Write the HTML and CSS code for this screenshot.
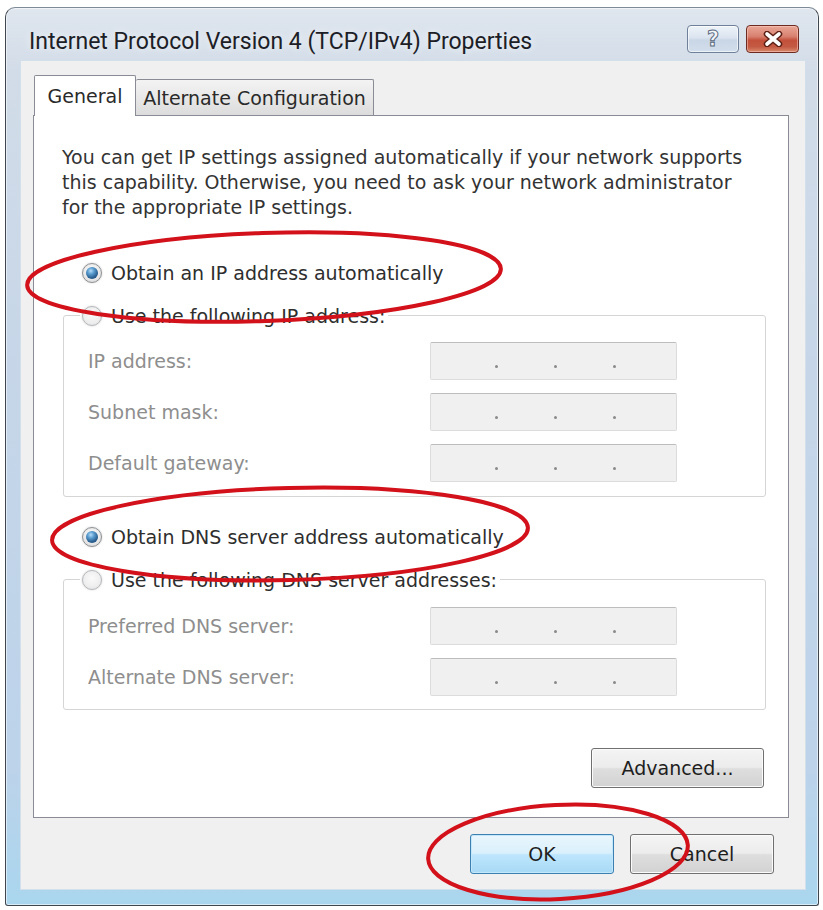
FILE: index.html
```html
<!DOCTYPE html>
<html>
<head>
<meta charset="utf-8">
<title>Internet Protocol Version 4 (TCP/IPv4) Properties</title>
<link rel="stylesheet" href="styles.css">
</head>
<body>
<div class="window">
  <div class="titlebar">
    <div class="title">Internet Protocol Version 4 (TCP/IPv4) Properties</div>
    <div class="controls">
      <div class="cbtn help"><span>?</span></div>
      <div class="cbtn close">
        <svg width="20" height="16" viewBox="0 0 20 16">
          <path d="M4 3 L16 13 M16 3 L4 13" stroke="#5b1f15" stroke-width="6.5" stroke-linecap="round"/>
          <path d="M4 3 L16 13 M16 3 L4 13" stroke="#ffffff" stroke-width="3.6" stroke-linecap="round"/>
        </svg>
      </div>
    </div>
  </div>
  <div class="client">
    <div class="tabs">
      <div class="tab active">General</div>
      <div class="tab">Alternate Configuration</div>
    </div>
    <div class="panel">
      <p class="intro">You can get IP settings assigned automatically if your network supports<br>this capability. Otherwise, you need to ask your network administrator<br>for the appropriate IP settings.</p>
      <div class="radio-row r1"><span class="radio checked"></span><span>Obtain an IP address automatically</span></div>
      <fieldset class="group g1">
        <legend><span class="radio off"></span><span>Use the following IP address:</span></legend>
        <div class="field"><span class="label">IP address:</span><div class="ipbox"><i></i><i></i><i></i></div></div>
        <div class="field"><span class="label">Subnet mask:</span><div class="ipbox"><i></i><i></i><i></i></div></div>
        <div class="field"><span class="label">Default gateway:</span><div class="ipbox"><i></i><i></i><i></i></div></div>
      </fieldset>
      <div class="radio-row r3"><span class="radio checked"></span><span>Obtain DNS server address automatically</span></div>
      <fieldset class="group g2">
        <legend><span class="radio off"></span><span>Use the following DNS server addresses:</span></legend>
        <div class="field"><span class="label">Preferred DNS server:</span><div class="ipbox"><i></i><i></i><i></i></div></div>
        <div class="field"><span class="label">Alternate DNS server:</span><div class="ipbox"><i></i><i></i><i></i></div></div>
      </fieldset>
      <div class="adv-row"><button class="btn adv">Advanced...</button></div>
    </div>
    <div class="footer">
      <button class="btn default">OK</button>
      <button class="btn">Cancel</button>
    </div>
  </div>
</div>
<svg class="annot" width="823" height="910" viewBox="0 0 823 910">
  <ellipse cx="264" cy="277" rx="237" ry="44" transform="rotate(-2 264 277)"/>
  <ellipse cx="290" cy="534" rx="238" ry="46" transform="rotate(-1.5 290 534)"/>
  <ellipse cx="558" cy="852" rx="130" ry="47" transform="rotate(-3 558 852)"/>
</svg>
</body>
</html>
```
FILE: styles.css
```css
html, body {
  margin: 0;
  padding: 0;
  background: #ffffff;
}
body {
  width: 823px;
  height: 910px;
  position: relative;
  overflow: hidden;
  font-family: "DejaVu Sans", "Open Sans", sans-serif;
  font-size: 19px;
  color: #2e2e2e;
}

.window {
  margin: 7px 0 0 5px;
  width: 814px;
  height: 899px;
  box-sizing: border-box;
  border: 1px solid #3f464e;
  border-top-color: #7d8a98;
  border-radius: 10px 10px 3px 3px;
  background: linear-gradient(180deg, #dfe6ee 0%, #d2dce8 7%, #c6d6e8 40%, #bcd3ea 85%, #a9d6ee 100%);
  box-shadow: inset 0 0 0 1px rgba(255,255,255,0.55);
  display: flex;
  flex-direction: column;
  padding: 0 13px 16px 15px;
}

.titlebar {
  height: 53px;
  display: flex;
  align-items: flex-start;
  flex: none;
}
.title {
  font-family: Roboto, "Open Sans", sans-serif;
  font-size: 23px;
  line-height: 28px;
  margin: 20px 0 0 8px;
  color: #1c2026;
  white-space: nowrap;
  text-shadow: 0 0 8px rgba(255,255,255,0.9);
}
.controls {
  margin: 17px 6px 0 auto;
  display: flex;
  gap: 7px;
}
.cbtn {
  height: 28px;
  box-sizing: border-box;
  border-radius: 4px;
  display: flex;
  align-items: center;
  justify-content: center;
}
.help {
  width: 52px;
  border: 1px solid #6f819a;
  background: linear-gradient(180deg, #eef3f8 0%, #dbe4ef 45%, #c9d6e6 55%, #d3deeb 100%);
  box-shadow: inset 0 0 0 1px rgba(255,255,255,0.6);
}
.help span {
  font-family: "DejaVu Sans", sans-serif;
  font-weight: bold;
  font-size: 21px;
  line-height: 1;
  color: #f3f6fa;
  -webkit-text-stroke: 1px #5b6a7f;
}
.close {
  width: 53px;
  border: 1px solid #6d2a20;
  background: linear-gradient(180deg, #e9a796 0%, #d88170 40%, #c3503b 55%, #c45a43 80%, #d98a6d 100%);
  box-shadow: inset 0 0 0 1px rgba(255,210,200,0.5);
}

.client {
  flex: 1;
  background: #f0f0f0;
  box-shadow: 0 0 0 1px #d3dfeb;
  display: flex;
  flex-direction: column;
  padding: 14px 16px 0 12px;
}

.tabs {
  display: flex;
  align-items: flex-end;
  height: 40px;
  position: relative;
  z-index: 1;
}
.tab {
  box-sizing: border-box;
  border: 1px solid #898c95;
  border-bottom: none;
  border-radius: 2px 2px 0 0;
  display: flex;
  align-items: center;
  justify-content: center;
  white-space: nowrap;
  color: #2a2a2a;
}
.tab.active {
  margin-left: 1px;
  width: 102px;
  height: 41px;
  margin-bottom: -1px;
  background: #ffffff;
}
.tab:not(.active) {
  width: 238px;
  height: 36px;
  border-left: none;
  background: linear-gradient(180deg, #f3f3f3 0%, #e8e8e8 50%, #dcdcdc 100%);
}

.panel {
  width: 756px;
  height: 703px;
  box-sizing: border-box;
  border: 1px solid #898c95;
  background: #ffffff;
  display: flex;
  flex-direction: column;
  padding: 29px 22px 0 29px;
}
.intro {
  margin: 0 0 0 -1px;
  line-height: 25px;
  white-space: nowrap;
  color: #333333;
}
.radio-row {
  display: flex;
  align-items: center;
  height: 25px;
  padding-left: 19px;
  white-space: nowrap;
  color: #2e2e2e;
}
.r1 { margin-top: 40px; }
.r3 { margin-top: 27px; }

.radio {
  width: 20px;
  height: 20px;
  flex: none;
  box-sizing: border-box;
  border-radius: 50%;
  border: 1px solid #8d8f92;
  background: radial-gradient(circle at 50% 40%, #ffffff 0%, #eaeaea 55%, #d2d2d2 100%);
  box-shadow: 0 0 2px rgba(150,150,150,0.5);
  position: relative;
  margin-right: 9px;
}
.radio.checked::after {
  content: "";
  position: absolute;
  inset: 3px;
  border-radius: 50%;
  background: radial-gradient(circle at 40% 32%, #b6dcf7 0%, #5a9dd0 30%, #2b5f8f 65%, #1b4670 100%);
}
.radio.off {
  border-color: #b5b7ba;
  background: radial-gradient(circle at 50% 40%, #fafafa 0%, #eeeeee 60%, #dedede 100%);
}

.group {
  margin: 18px 0 0 0;
  border: 1px solid #d5d5d5;
  border-radius: 3px;
  padding: 14px 0 14px 24px;
  display: flex;
  flex-direction: column;
  gap: 13px;
  min-inline-size: 0;
}
.g2 { padding-top: 15px; padding-bottom: 13px; }
.group legend {
  display: flex;
  align-items: center;
  height: 25px;
  padding: 0 3px 0 2px;
  margin-left: -8px;
  white-space: nowrap;
  color: #2e2e2e;
}
.field {
  display: flex;
  align-items: center;
  height: 38px;
}
.label {
  width: 342px;
  flex: none;
  color: #8e8e8e;
  white-space: nowrap;
}
.ipbox {
  width: 247px;
  height: 38px;
  box-sizing: border-box;
  border: 1px solid #dcdcdc;
  border-top-color: #bdbdbd;
  border-radius: 2px;
  background: #f0f0f0;
  display: flex;
  padding-left: 64px;
  gap: 56px;
}
.ipbox i {
  width: 3px;
  height: 3px;
  border-radius: 50%;
  background: #8a8a8a;
  margin-top: 22px;
}

.adv-row {
  margin-top: 38px;
  display: flex;
  justify-content: flex-end;
  padding-right: 2px;
}

.btn {
  font-family: inherit;
  font-size: 19px;
  color: #1e1e1e;
  width: 144px;
  height: 40px;
  box-sizing: border-box;
  border: 1px solid #707070;
  border-radius: 3px;
  background: linear-gradient(180deg, #f4f4f4 0%, #ececec 48%, #dedede 52%, #d2d2d2 100%);
  box-shadow: inset 0 0 0 1px #fbfbfb;
  padding: 0;
}
.btn.adv { width: 173px; }
.btn.default {
  border-color: #3c7fb1;
  background: linear-gradient(180deg, #eaf6fd 0%, #d9f0fc 48%, #bee6fd 52%, #a7d9f5 100%);
  box-shadow: inset 0 0 0 1px #c4e8fb;
}

.footer {
  margin-top: 16px;
  display: flex;
  justify-content: flex-end;
  gap: 16px;
  padding-right: 15px;
}

.annot {
  position: absolute;
  left: 0;
  top: 0;
  pointer-events: none;
}
.annot ellipse {
  fill: none;
  stroke: #d3111b;
  stroke-width: 4;
}
```
